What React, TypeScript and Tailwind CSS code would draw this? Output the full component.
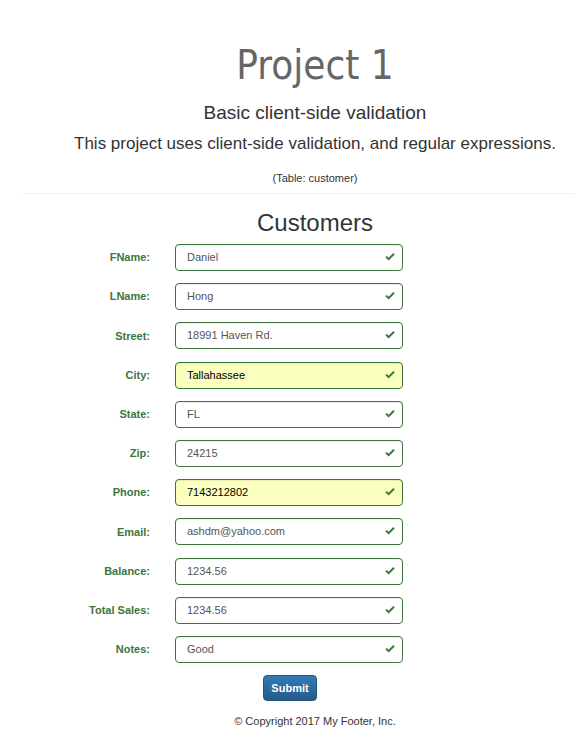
import React from 'react'

interface Field {
  label: string
  value: string
  autofill?: boolean
}

const fields: Field[] = [
  { label: 'FName:', value: 'Daniel' },
  { label: 'LName:', value: 'Hong' },
  { label: 'Street:', value: '18991 Haven Rd.' },
  { label: 'City:', value: 'Tallahassee', autofill: true },
  { label: 'State:', value: 'FL' },
  { label: 'Zip:', value: '24215' },
  { label: 'Phone:', value: '7143212802', autofill: true },
  { label: 'Email:', value: 'ashdm@yahoo.com' },
  { label: 'Balance:', value: '1234.56' },
  { label: 'Total Sales:', value: '1234.56' },
  { label: 'Notes:', value: 'Good' },
]

const Check: React.FC = () => (
  <svg width="10" height="8" viewBox="0 0 10 8" className="absolute right-[8px] top-[9px]">
    <path d="M0.3 4.3 L3.6 7.6 L9.7 1.5 L8.3 0.1 L3.6 4.8 L1.7 2.9 Z" fill="#3c763d" />
  </svg>
)

export default function App() {
  return (
    <div className="w-[575px] min-h-[752px] bg-white text-[#333]" style={{ fontFamily: '"Liberation Sans", Arial, sans-serif' }}>
      <div className="ml-[55px] w-[520px] pt-[41px] text-center">
        <h1
          className="text-[40px] leading-[48px] text-[#666] font-stretch-condensed"
          style={{ fontFamily: '"DejaVu Sans Condensed", "DejaVu Sans", Verdana, sans-serif' }}
        >
          Project 1
        </h1>
        <h2 className="mt-[13px] text-[19px] leading-[22px]">Basic client-side validation</h2>
        <p className="mt-[9px] text-[17px] leading-[22px]">
          This project uses client-side validation, and regular expressions.
        </p>
        <p className="mt-[16px] text-[11px] leading-[14px]">(Table: customer)</p>
      </div>
      <hr className="ml-[23px] mt-[8px] w-[551px] border-t border-[#eee]" />

      <div className="ml-[55px] w-[520px] text-center">
        <h2 className="mt-[15px] text-[24px] leading-[28px]">Customers</h2>
      </div>

      <form className="mt-[7px] flex flex-col gap-[12.2px]">
        {fields.map((f) => (
          <div key={f.label} className="flex items-center">
            <label className="w-[150px] text-right text-[11px] font-bold text-[#3c763d]">{f.label}</label>
            <div className="relative ml-[25px] w-[228px]">
              <div
                className={
                  'h-[27px] rounded-[4px] border border-[#3c763d] pl-[11px] text-[11px] leading-[25px] shadow-[inset_0_1px_1px_rgba(0,0,0,0.075)] ' +
                  (f.autofill ? 'bg-[#faffbd] text-black' : 'bg-white text-[#555]')
                }
              >
                {f.value}
              </div>
              <Check />
            </div>
          </div>
        ))}
      </form>

      <div className="ml-[263px] mt-[12px]">
        <button className="h-[26px] w-[54px] rounded-[4px] border border-[#245580] bg-gradient-to-b from-[#337ab7] to-[#265a88] text-[11px] font-bold text-white">
          Submit
        </button>
      </div>
      <div className="ml-[55px] w-[520px] text-center">
        <p className="mt-[13px] text-[11px] leading-[14px] text-[#333]">© Copyright 2017 My Footer, Inc.</p>
      </div>
    </div>
  )
}
